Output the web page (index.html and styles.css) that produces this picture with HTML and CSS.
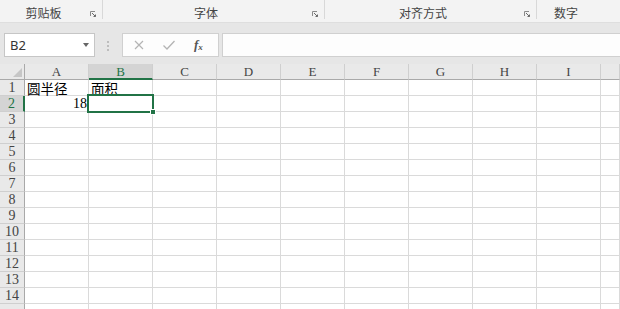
FILE: index.html
```html
<!DOCTYPE html>
<html>
<head>
<meta charset="utf-8">
<link rel="stylesheet" href="styles.css">
</head>
<body>
<div class="ribbon">
	<div class="group g1"><span class="label">剪贴板</span><span class="launcher"><svg width="6" height="6" viewBox="0 0 6 6"><path d="M0.5 5 V0.5 H5" fill="none" stroke="#8a8a8a" /><path d="M2 2 L5.5 5.5 M3.5 5.5 H5.5 V3.5" fill="none" stroke="#6a6a6a" /></svg></span></div>
	<div class="group g2"><span class="label">字体</span><span class="launcher"><svg width="6" height="6" viewBox="0 0 6 6"><path d="M0.5 5 V0.5 H5" fill="none" stroke="#8a8a8a" /><path d="M2 2 L5.5 5.5 M3.5 5.5 H5.5 V3.5" fill="none" stroke="#6a6a6a" /></svg></span></div>
	<div class="group g3"><span class="label">对齐方式</span><span class="launcher"><svg width="6" height="6" viewBox="0 0 6 6"><path d="M0.5 5 V0.5 H5" fill="none" stroke="#8a8a8a" /><path d="M2 2 L5.5 5.5 M3.5 5.5 H5.5 V3.5" fill="none" stroke="#6a6a6a" /></svg></span></div>
	<div class="group g4"><span class="label">数字</span></div>
</div>
<div class="toolbar">
	<div class="namebox"><span>B2</span><span class="caret"></span></div>
	<div class="grip"><i></i><i></i><i></i></div>
	<div class="fxbtns">
		<svg class="btn" width="12" height="12" viewBox="0 0 12 12"><path d="M2 2 L10 10 M10 2 L2 10" stroke="#b4b4b4" stroke-width="1.2" /></svg>
		<svg class="btn" width="14" height="12" viewBox="0 0 14 12"><path d="M1.5 6.5 L5 10 L12.5 2" fill="none" stroke="#b4b4b4" stroke-width="1.3" /></svg>
		<span class="fx">f<sub>x</sub></span>
	</div>
	<div class="formula"></div>
</div>
<div class="sheet">
	<div class="hd corner"><span class="tri"></span></div><div class="hd col">A</div><div class="hd col active">B</div><div class="hd col">C</div><div class="hd col">D</div><div class="hd col">E</div><div class="hd col">F</div><div class="hd col">G</div><div class="hd col">H</div><div class="hd col">I</div><div class="hd col"></div>
	<div class="hd row">1</div><div class="c">圆半径</div><div class="c">面积</div><div class="c"></div><div class="c"></div><div class="c"></div><div class="c"></div><div class="c"></div><div class="c"></div><div class="c"></div><div class="c"></div>
	<div class="hd row active">2</div><div class="c num">18</div><div class="c"></div><div class="c"></div><div class="c"></div><div class="c"></div><div class="c"></div><div class="c"></div><div class="c"></div><div class="c"></div><div class="c"></div>
	<div class="hd row">3</div><div class="c"></div><div class="c"></div><div class="c"></div><div class="c"></div><div class="c"></div><div class="c"></div><div class="c"></div><div class="c"></div><div class="c"></div><div class="c"></div>
	<div class="hd row">4</div><div class="c"></div><div class="c"></div><div class="c"></div><div class="c"></div><div class="c"></div><div class="c"></div><div class="c"></div><div class="c"></div><div class="c"></div><div class="c"></div>
	<div class="hd row">5</div><div class="c"></div><div class="c"></div><div class="c"></div><div class="c"></div><div class="c"></div><div class="c"></div><div class="c"></div><div class="c"></div><div class="c"></div><div class="c"></div>
	<div class="hd row">6</div><div class="c"></div><div class="c"></div><div class="c"></div><div class="c"></div><div class="c"></div><div class="c"></div><div class="c"></div><div class="c"></div><div class="c"></div><div class="c"></div>
	<div class="hd row">7</div><div class="c"></div><div class="c"></div><div class="c"></div><div class="c"></div><div class="c"></div><div class="c"></div><div class="c"></div><div class="c"></div><div class="c"></div><div class="c"></div>
	<div class="hd row">8</div><div class="c"></div><div class="c"></div><div class="c"></div><div class="c"></div><div class="c"></div><div class="c"></div><div class="c"></div><div class="c"></div><div class="c"></div><div class="c"></div>
	<div class="hd row">9</div><div class="c"></div><div class="c"></div><div class="c"></div><div class="c"></div><div class="c"></div><div class="c"></div><div class="c"></div><div class="c"></div><div class="c"></div><div class="c"></div>
	<div class="hd row">10</div><div class="c"></div><div class="c"></div><div class="c"></div><div class="c"></div><div class="c"></div><div class="c"></div><div class="c"></div><div class="c"></div><div class="c"></div><div class="c"></div>
	<div class="hd row">11</div><div class="c"></div><div class="c"></div><div class="c"></div><div class="c"></div><div class="c"></div><div class="c"></div><div class="c"></div><div class="c"></div><div class="c"></div><div class="c"></div>
	<div class="hd row">12</div><div class="c"></div><div class="c"></div><div class="c"></div><div class="c"></div><div class="c"></div><div class="c"></div><div class="c"></div><div class="c"></div><div class="c"></div><div class="c"></div>
	<div class="hd row">13</div><div class="c"></div><div class="c"></div><div class="c"></div><div class="c"></div><div class="c"></div><div class="c"></div><div class="c"></div><div class="c"></div><div class="c"></div><div class="c"></div>
	<div class="hd row">14</div><div class="c"></div><div class="c"></div><div class="c"></div><div class="c"></div><div class="c"></div><div class="c"></div><div class="c"></div><div class="c"></div><div class="c"></div><div class="c"></div>
	<div class="hd row last"></div><div class="c"></div><div class="c"></div><div class="c"></div><div class="c"></div><div class="c"></div><div class="c"></div><div class="c"></div><div class="c"></div><div class="c"></div><div class="c"></div>
	<div class="selection"><span class="handle"></span></div>
</div>
</body>
</html>
```

FILE: styles.css
```css
*
{
	box-sizing: border-box;
}
body
{
	margin: 0;
	width: 620px;
	height: 309px;
	overflow: hidden;
	background: #ffffff;
	font-family: "Noto Sans CJK SC", "Noto Sans", sans-serif;
}
.ribbon
{
	display: flex;
	height: 22px;
	overflow: hidden;
	background: #f3f3f3;
	color: #444444;
	font-size: 12px;
}
.group
{
	display: flex;
	flex: none;
	height: 19px;
	border-right: 1px solid #d8d8d8;
}
.g1 { width: 103px; }
.g2 { width: 222px; }
.g3 { width: 212px; }
.g4 { width: 83px; padding-right: 25px; border-right: none; }
.label
{
	flex: 1;
	text-align: center;
	line-height: 12px;
	padding-top: 7px;
	white-space: nowrap;
}
.launcher
{
	width: 15px;
	padding: 11px 0 0 3px;
}
.launcher svg
{
	display: block;
}
.toolbar
{
	display: flex;
	align-items: flex-start;
	height: 42px;
	overflow: hidden;
	padding: 10px 0 0 4px;
	background: #e6e6e6;
	border-top: 1px solid #dedede;
}
.namebox
{
	display: flex;
	align-items: center;
	justify-content: space-between;
	width: 91px;
	height: 24px;
	padding: 0 5px 0 5px;
	background: #ffffff;
	border: 1px solid #c6c6c6;
	font-family: "Noto Sans", sans-serif;
	font-size: 13px;
	color: #333333;
}
.caret
{
	width: 0;
	height: 0;
	border-left: 3.5px solid transparent;
	border-right: 3.5px solid transparent;
	border-top: 4px solid #666666;
}
.grip
{
	display: flex;
	flex-direction: column;
	gap: 2px;
	width: 27px;
	padding: 8px 0 0 12px;
}
.grip i
{
	display: block;
	width: 2px;
	height: 2px;
	background: #bdbdbd;
}
.fxbtns
{
	display: flex;
	align-items: center;
	width: 97px;
	height: 24px;
	padding-left: 10px;
	gap: 17px;
	background: #fdfdfd;
	border: 1px solid #d0d0d0;
}
.fxbtns .btn
{
	flex: none;
}
.fx
{
	font-family: "Liberation Serif", serif;
	font-style: italic;
	font-weight: bold;
	font-size: 13px;
	color: #555555;
	margin-left: 1px;
}
.fx sub
{
	font-size: 9px;
	vertical-align: -1px;
}
.formula
{
	flex: 1;
	height: 24px;
	margin-left: 3px;
	background: #fdfdfd;
	border: 1px solid #d0d0d0;
	border-right: none;
}
.sheet
{
	position: relative;
	display: grid;
	grid-template-columns: 25px repeat(9, 64px) 19px;
	grid-auto-rows: 16px;
	width: 620px;
	overflow: hidden;
}
.hd
{
	display: flex;
	align-items: center;
	justify-content: center;
	background: #e9e9e9;
	color: #444444;
	font-family: "Liberation Serif", serif;
	font-size: 13px;
}
.col
{
	border-right: 1px solid #cfcfcf;
	border-bottom: 1px solid #a9a9a9;
	padding-top: 1px;
}
.row
{
	border-right: 1px solid #a9a9a9;
	border-bottom: 1px solid #cfcfcf;
	font-size: 14px;
}
.corner
{
	position: relative;
	border-right: 1px solid #a9a9a9;
	border-bottom: 1px solid #a9a9a9;
}
.tri
{
	position: absolute;
	right: 2px;
	bottom: 2px;
	width: 0;
	height: 0;
	border-left: 9px solid transparent;
	border-bottom: 9px solid #c6c6c6;
}
.col.active
{
	background: #d4d4d4;
	color: #217346;
	border-bottom: 2px solid #217346;
}
.row.active
{
	background: #d4d4d4;
	color: #217346;
	border-right: 2px solid #217346;
}
.c
{
	display: flex;
	align-items: flex-end;
	padding: 0 0 0 2px;
	border-right: 1px solid #dadada;
	border-bottom: 1px solid #dadada;
	font-family: "Noto Sans CJK SC", sans-serif;
	font-size: 13.5px;
	line-height: 14px;
	color: #000000;
	white-space: nowrap;
}
.num
{
	justify-content: flex-end;
	padding: 0 1px 0 0;
	font-family: "Liberation Serif", serif;
	font-size: 14px;
}
.selection
{
	position: absolute;
	left: 87px;
	top: 30px;
	width: 67px;
	height: 19px;
	border: 2px solid #217346;
}
.handle
{
	position: absolute;
	right: -4px;
	bottom: -4px;
	width: 6px;
	height: 6px;
	background: #217346;
	border: 1px solid #ffffff;
}
```
